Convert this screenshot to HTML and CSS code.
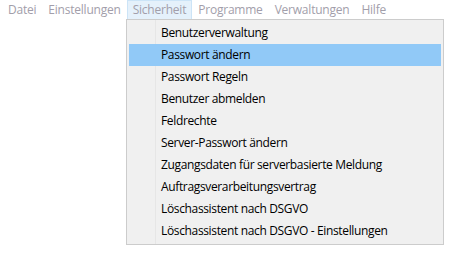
FILE: index.html
```html
<!DOCTYPE html>
<html lang="de">
<head>
    <meta charset="UTF-8">
    <title>Sicherheit</title>
    <link rel="stylesheet" href="styles.css">
</head>
<body>
<div class="menubar">
    <span class="item">Datei</span>
    <span class="item">Einstellungen</span>
    <span class="item open">Sicherheit</span>
    <span class="item">Programme</span>
    <span class="item">Verwaltungen</span>
    <span class="item">Hilfe</span>
</div>
<div class="dropdown">
    <div class="entry">Benutzerverwaltung</div>
    <div class="entry on">Passwort ändern</div>
    <div class="entry">Passwort Regeln</div>
    <div class="entry">Benutzer abmelden</div>
    <div class="entry">Feldrechte</div>
    <div class="entry">Server-Passwort ändern</div>
    <div class="entry">Zugangsdaten für serverbasierte Meldung</div>
    <div class="entry">Auftragsverarbeitungsvertrag</div>
    <div class="entry">Löschassistent nach DSGVO</div>
    <div class="entry">Löschassistent nach DSGVO - Einstellungen</div>
</div>
</body>
</html>
```

FILE: styles.css
```css
* {
    margin: 0;
    padding: 0;
    box-sizing: border-box;
}
body {
    background: #fff;
    font-family: "Open Sans", "Noto Sans", sans-serif;
    font-size: 12px;
    letter-spacing: -0.35px;
    color: #000;
}
.menubar {
    display: flex;
    height: 19px;
    padding-left: 2px;
    background: #fff;
    letter-spacing: -0.22px;
}
.menubar .item {
    padding: 0 5px;
    border: 1px solid transparent;
    border-bottom: 0;
    line-height: 18px;
    color: #a29eaa;
    white-space: nowrap;
}
.menubar .open {
    background: #e5f1fb;
    border-color: #cce4f7;
}
.dropdown {
    width: 318px;
    margin-left: 126px;
    padding: 2px;
    border: 1px solid #ccc;
    background: #f0f0f0;
    background-image: linear-gradient(#e6e6e6, #e6e6e6);
    background-size: 1px 100%;
    background-position: 28px 0;
    background-repeat: no-repeat;
}
.dropdown .entry {
    height: 22px;
    line-height: 22px;
    padding-left: 32px;
    white-space: nowrap;
}
.dropdown .on {
    background: #91c9f7;
}
```
